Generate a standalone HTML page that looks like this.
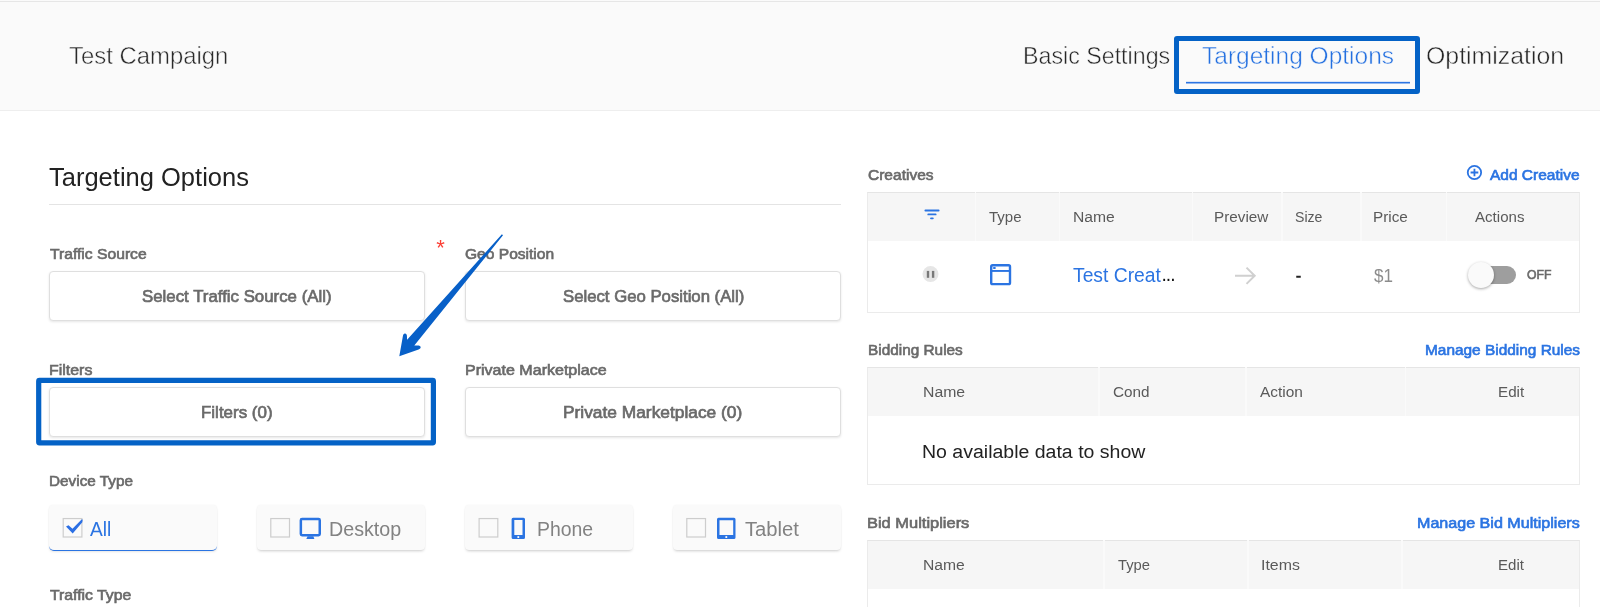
<!DOCTYPE html>
<html>
<head>
<meta charset="utf-8">
<title>Test Campaign</title>
<style>
*{box-sizing:border-box;margin:0;padding:0}
html,body{width:1600px;height:607px;overflow:hidden;background:#fff}
body{font-family:"Liberation Sans",sans-serif;position:relative;color:#333}
.abs{position:absolute}
.t{position:absolute;white-space:nowrap;line-height:1;transform-origin:0 0}
#root{position:absolute;left:0;top:0;width:1600px;height:607px;will-change:transform;overflow:hidden}
#hdr{left:0;top:0;width:1600px;height:111px;background:#fafafa;border-bottom:1px solid #eee}
#hdrtop{left:0;top:1px;width:1600px;height:1px;background:#e6e6e6}
.hl{position:absolute;border:5px solid #0462c6;border-radius:3px}
.btn{position:absolute;height:50px;width:376px;border:1px solid #dfdfdf;border-radius:4px;background:#fff;box-shadow:0 1px 2.5px rgba(0,0,0,.10)}
.card{position:absolute;top:504.6px;height:45.4px;width:168.3px;background:#fafafa;border-radius:4px;box-shadow:0 2px 3px -1px rgba(0,0,0,.20),0 0 1.5px rgba(0,0,0,.08)}
.cb{position:absolute;top:517.9px;width:19.8px;height:19.6px;border:1.2px solid #cfcfcf}
.tbl{position:absolute;left:867px;width:713px;border:1px solid #ebebeb;border-top-color:#e5e5e5;background:#fff}
.thd{position:absolute;left:868px;width:711px;height:48px;background:#f6f6f6}
.sep{position:absolute;width:1.5px;height:49px;background:#fafafa}
</style>
</head>
<body>
<div id="root">

<!-- HEADER -->
<div id="hdr" class="abs"></div>
<div id="hdrtop" class="abs"></div>
<div class="t" id="tc" style="left:68.72px;top:44.00px;font-size:24.60px;color:#2a2a2a;transform:scaleX(0.9716);-webkit-text-stroke:0.5px #fafafa">Test Campaign</div>
<div class="t" id="n1" style="left:1022.89px;top:44.01px;font-size:24.60px;color:#262626;transform:scaleX(0.9444);-webkit-text-stroke:0.5px #fafafa">Basic Settings</div>
<div class="t" id="n2" style="left:1201.76px;top:44.01px;font-size:24.60px;color:#2470e0;transform:scaleX(0.9962);-webkit-text-stroke:0.5px #fafafa">Targeting Options</div>
<div class="t" id="n3" style="left:1425.91px;top:44.01px;font-size:24.60px;color:#262626;transform:scaleX(1.0111);-webkit-text-stroke:0.5px #fafafa">Optimization</div>
<div class="hl" style="left:1174px;top:36px;width:246px;height:58px"></div>

<!-- LEFT COLUMN -->
<div class="t" id="h1" style="left:48.84px;top:165.02px;font-size:24.90px;color:#222;transform:scaleX(1.0249)">Targeting Options</div>
<div class="abs" style="left:49px;top:204px;width:792px;height:1px;background:#e4e4e4"></div>

<div class="t" id="l1" style="left:49.51px;top:246.01px;font-size:15.20px;color:#6a6a6a;transform:scaleX(1.0316);-webkit-text-stroke:0.65px #6a6a6a">Traffic Source</div>
<div class="t" style="left:436.3px;top:237px;font-size:22px;color:#fb3f35">*</div>
<div class="t" id="l2" style="left:464.85px;top:246.01px;font-size:15.20px;color:#6a6a6a;transform:scaleX(1.0250);-webkit-text-stroke:0.65px #6a6a6a">Geo Position</div>
<div class="btn" style="left:49px;top:271px"></div>
<div class="btn" style="left:465px;top:271px"></div>
<div class="t" id="b1" style="left:142.35px;top:288.01px;font-size:16.20px;color:#6a6a6a;transform:scaleX(1.0397);-webkit-text-stroke:0.65px #6a6a6a">Select Traffic Source (All)</div>
<div class="t" id="b2" style="left:562.56px;top:288.01px;font-size:16.20px;color:#6a6a6a;transform:scaleX(1.0338);-webkit-text-stroke:0.65px #6a6a6a">Select Geo Position (All)</div>

<div class="t" id="l3" style="left:49.05px;top:362.01px;font-size:15.20px;color:#6a6a6a;transform:scaleX(1.0490);-webkit-text-stroke:0.65px #6a6a6a">Filters</div>
<div class="t" id="l4" style="left:464.79px;top:362.01px;font-size:15.20px;color:#6a6a6a;transform:scaleX(1.0558);-webkit-text-stroke:0.65px #6a6a6a">Private Marketplace</div>
<div class="btn" style="left:49px;top:387px"></div>
<div class="btn" style="left:465px;top:387px"></div>
<div class="t" id="b3" style="left:201.47px;top:404.01px;font-size:16.20px;color:#6a6a6a;transform:scaleX(1.0469);-webkit-text-stroke:0.65px #6a6a6a">Filters (0)</div>
<div class="t" id="b4" style="left:563.24px;top:404.01px;font-size:16.20px;color:#6a6a6a;transform:scaleX(1.0711);-webkit-text-stroke:0.65px #6a6a6a">Private Marketplace (0)</div>

<div class="t" id="l5" style="left:48.80px;top:473.01px;font-size:15.20px;color:#6a6a6a;transform:scaleX(1.0083);-webkit-text-stroke:0.65px #6a6a6a">Device Type</div>

<div class="card" style="left:48.8px"></div>
<div class="abs" style="left:48.8px;top:544px;width:168.3px;height:7px;border-bottom:1.7px solid #2b74e2;border-radius:0 0 5px 5px"></div>
<div class="card" style="left:256.9px"></div>
<div class="card" style="left:465px"></div>
<div class="card" style="left:673px"></div>
<div class="t" id="d1" style="left:90.40px;top:520.01px;font-size:19.60px;color:#2b74e2;transform:scaleX(0.9775)">All</div>
<div class="t" id="d2" style="left:328.73px;top:520.02px;font-size:19.50px;color:#828282;transform:scaleX(1.0091)">Desktop</div>
<div class="t" id="d3" style="left:536.85px;top:520.02px;font-size:19.50px;color:#828282;transform:scaleX(0.9959)">Phone</div>
<div class="t" id="d4" style="left:744.60px;top:520.02px;font-size:19.50px;color:#828282;transform:scaleX(1.0370)">Tablet</div>

<div class="t" id="l6" style="left:49.71px;top:587.02px;font-size:15.20px;color:#6a6a6a;transform:scaleX(1.0379);-webkit-text-stroke:0.65px #6a6a6a">Traffic Type</div>


<!-- RIGHT COLUMN -->
<div class="t" id="r1" style="left:867.55px;top:167.01px;font-size:15.20px;color:#6a6a6a;transform:scaleX(1.0217);-webkit-text-stroke:0.65px #6a6a6a">Creatives</div>
<div class="t" id="r2" style="left:1490.42px;top:167.01px;font-size:15.20px;color:#2b74e2;transform:scaleX(1.0198);-webkit-text-stroke:0.65px #2b74e2">Add Creative</div>
<div class="tbl" style="top:192px;height:120.5px"></div>
<div class="thd" style="top:193px"></div>
<div class="sep" style="left:974.5px;top:192px"></div>
<div class="sep" style="left:1058.7px;top:192px"></div>
<div class="sep" style="left:1191.5px;top:192px"></div>
<div class="sep" style="left:1281px;top:192px"></div>
<div class="sep" style="left:1360px;top:192px"></div>
<div class="sep" style="left:1445.7px;top:192px"></div>
<div class="t" id="c1" style="left:989.20px;top:209.01px;font-size:15.30px;color:#5a5a5a;transform:scaleX(0.9826)">Type</div><div class="t" id="c2" style="left:1073.25px;top:209.01px;font-size:15.30px;color:#5a5a5a;transform:scaleX(1.0247)">Name</div><div class="t" id="c3" style="left:1213.58px;top:209.01px;font-size:15.30px;color:#5a5a5a;transform:scaleX(0.9979)">Preview</div><div class="t" id="c4" style="left:1295.44px;top:209.01px;font-size:15.30px;color:#5a5a5a;transform:scaleX(0.9231)">Size</div><div class="t" id="c5" style="left:1373.28px;top:209.01px;font-size:15.30px;color:#5a5a5a;transform:scaleX(1.0006)">Price</div><div class="t" id="c6" style="left:1474.75px;top:209.01px;font-size:15.30px;color:#5a5a5a;transform:scaleX(0.9856)">Actions</div>
<div class="t" id="v1" style="left:1073.01px;top:266.01px;font-size:19.30px;color:#2b74e2;transform:scaleX(0.9999)">Test Creat</div>
<div class="t" style="left:1161.5px;top:265.3px;font-size:19.3px;color:#111;letter-spacing:-1px">...</div>
<div class="t" id="v3" style="left:1374.33px;top:267.01px;font-size:18.60px;color:#8c8c8c;transform:scaleX(0.9163)">$1</div>
<!-- toggle -->
<div class="abs" style="left:1477px;top:266px;width:39.3px;height:18px;border-radius:9px;background:#9e9e9e"></div>
<div class="abs" style="left:1468px;top:261.7px;width:26.3px;height:26.3px;border-radius:50%;background:#fafafa;box-shadow:0 1px 3px rgba(0,0,0,.35)"></div>
<div class="t" id="v4" style="left:1527.34px;top:268.00px;font-size:13.60px;color:#6a6a6a;transform:scaleX(0.8997);-webkit-text-stroke:0.65px #6a6a6a">OFF</div>

<div class="t" id="r3" style="left:867.50px;top:342.01px;font-size:15.20px;color:#6a6a6a;transform:scaleX(1.0112);-webkit-text-stroke:0.65px #6a6a6a">Bidding Rules</div>
<div class="t" id="r4" style="left:1424.69px;top:342.01px;font-size:15.20px;color:#2b74e2;transform:scaleX(1.0144);-webkit-text-stroke:0.65px #2b74e2">Manage Bidding Rules</div>
<div class="tbl" style="top:367px;height:118px"></div>
<div class="thd" style="top:368px"></div>
<div class="sep" style="left:1098px;top:367px"></div>
<div class="sep" style="left:1245px;top:367px"></div>
<div class="sep" style="left:1404.8px;top:367px"></div>
<div class="t" id="e1" style="left:922.54px;top:384.00px;font-size:15.30px;color:#5a5a5a;transform:scaleX(1.0324)">Name</div><div class="t" id="e2" style="left:1112.73px;top:384.00px;font-size:15.30px;color:#5a5a5a;transform:scaleX(1.0014)">Cond</div><div class="t" id="e3" style="left:1260.10px;top:384.00px;font-size:15.30px;color:#5a5a5a;transform:scaleX(1.0105)">Action</div><div class="t" id="e4" style="left:1497.88px;top:384.00px;font-size:15.30px;color:#5a5a5a;transform:scaleX(0.9931)">Edit</div>
<div class="t" id="e5" style="left:922.24px;top:442.00px;font-size:19.20px;color:#222;transform:scaleX(1.0165)">No available data to show</div>

<div class="t" id="r5" style="left:867.26px;top:515.01px;font-size:15.20px;color:#6a6a6a;transform:scaleX(1.0825);-webkit-text-stroke:0.65px #6a6a6a">Bid Multipliers</div>
<div class="t" id="r6" style="left:1417.29px;top:515.01px;font-size:15.20px;color:#2b74e2;transform:scaleX(1.0593);-webkit-text-stroke:0.65px #2b74e2">Manage Bid Multipliers</div>
<div class="tbl" style="top:540px;height:100px"></div>
<div class="thd" style="top:541px;height:47.5px"></div>
<div class="sep" style="left:1103.3px;top:540px"></div>
<div class="sep" style="left:1247px;top:540px"></div>
<div class="sep" style="left:1401px;top:540px"></div>
<div class="t" id="f1" style="left:922.50px;top:557.00px;font-size:15.30px;color:#5a5a5a;transform:scaleX(1.0247)">Name</div><div class="t" id="f2" style="left:1118.45px;top:557.00px;font-size:15.30px;color:#5a5a5a;transform:scaleX(0.9672)">Type</div><div class="t" id="f3" style="left:1261.07px;top:557.00px;font-size:15.30px;color:#5a5a5a;transform:scaleX(1.0402)">Items</div><div class="t" id="f4" style="left:1498.05px;top:557.00px;font-size:15.30px;color:#5a5a5a;transform:scaleX(0.9832)">Edit</div>

<!-- ICONS + ARROW (svg overlay) -->
<svg class="abs" style="left:0;top:0" width="1600" height="607" viewBox="0 0 1600 607">
  <!-- checkboxes -->
  <rect x="63.20" y="518.55" width="18.7" height="18.45" fill="none" stroke="#cdcdcd" stroke-width="1.2"/>
  <rect x="270.80" y="518.55" width="18.7" height="18.45" fill="none" stroke="#cdcdcd" stroke-width="1.2"/>
  <rect x="479.10" y="518.55" width="18.7" height="18.45" fill="none" stroke="#cdcdcd" stroke-width="1.2"/>
  <rect x="686.80" y="518.55" width="18.7" height="18.45" fill="none" stroke="#cdcdcd" stroke-width="1.2"/>
  <!-- checkmark -->
  <path d="M66.0 526.5 L68.5 525.2 L72.5 528.7 L81.6 519.6 L82.7 519.5 L82.3 522.2 L72.7 533.6 Z" fill="#2b6fe4"/>
  <!-- desktop -->
  <rect x="300.85" y="519" width="18.9" height="16.2" rx="1.2" fill="none" stroke="#2b74e2" stroke-width="2.5"/>
  <path d="M307.6 536.3 L313.3 536.3 L314.4 539 L306.3 539 Z" fill="#2b74e2"/>
  <!-- phone -->
  <path fill-rule="evenodd" fill="#2b74e2" d="M513.1 517.75 h10.4 a1.5 1.5 0 0 1 1.5 1.5 v18.25 a1.5 1.5 0 0 1 -1.5 1.5 h-10.4 a1.5 1.5 0 0 1 -1.5 -1.5 v-18.25 a1.5 1.5 0 0 1 1.5 -1.5 Z M514.3 520 v14.9 h8.2 v-14.9 Z M518.3 535.9 a1.1 1.1 0 1 0 0.001 0 Z"/>
  <!-- tablet -->
  <path fill-rule="evenodd" fill="#2b74e2" d="M718.5 517.75 h15.5 a1.5 1.5 0 0 1 1.5 1.5 v18.25 a1.5 1.5 0 0 1 -1.5 1.5 h-15.5 a1.5 1.5 0 0 1 -1.5 -1.5 v-18.25 a1.5 1.5 0 0 1 1.5 -1.5 Z M719.5 520.2 v14.7 h13.7 v-14.7 Z M726.3 535.9 a1.1 1.1 0 1 0 0.001 0 Z"/>

  <!-- nav underline -->
  <rect x="1186" y="81.85" width="224" height="1.65" fill="#2b74e2"/>
  <!-- filters highlight -->
  <rect x="38.7" y="380.4" width="394.7" height="62.4" rx="0.8" fill="none" stroke="#0462c6" stroke-width="5.2"/>
  <!-- big arrow -->
  <defs><linearGradient id="ag" x1="0" y1="0" x2="1" y2="1"><stop offset="0" stop-color="#0a5cc6"/><stop offset="1" stop-color="#0d66cf"/></linearGradient></defs>
  <path fill="#0860c8" d="M501.9 234.2 L407.1 339.8 L406.9 335.6 Q406.6 333.4 404.9 333.5 Q403.4 333.7 403.0 335.6 L399.3 356.3 L418.6 349.6 Q420.9 348.6 420.7 346.9 Q420.3 345.3 418.4 345.4 L414.3 345.6 L503 235.3 Z"/>

  <!-- filter icon -->
  <g stroke="#2b74e2" stroke-width="1.9" stroke-linecap="round">
    <line x1="925.4" y1="210.55" x2="938.6" y2="210.55"/>
    <line x1="928.3" y1="214.4" x2="935.6" y2="214.4"/>
    <line x1="931" y1="218.35" x2="932.8" y2="218.35"/>
  </g>
  <!-- pause icon -->
  <circle cx="930.5" cy="274.05" r="8" fill="#e6e6e6"/>
  <rect x="926.8" y="270.9" width="2.4" height="6.9" fill="#787878"/>
  <rect x="931.9" y="270.9" width="2.4" height="6.9" fill="#787878"/>
  <!-- window icon -->
  <rect x="991.2" y="265.3" width="18.8" height="18.8" rx="1.4" fill="none" stroke="#2b74e2" stroke-width="2.4"/>
  <rect x="991.1" y="270" width="19" height="1.9" fill="#2b74e2"/>
  <rect x="993.2" y="267" width="2.4" height="2" fill="#2b74e2"/>
  <!-- preview arrow -->
  <path d="M1235 275.75 H1254.5 M1246.5 267.6 L1254.7 275.75 L1246.5 283.9" fill="none" stroke="#d0d0d0" stroke-width="2"/>
  <!-- dash -->
  <rect x="1296.25" y="275.75" width="4.5" height="2" fill="#222"/>
  <!-- add icon -->
  <circle cx="1474.45" cy="172.5" r="6.7" fill="none" stroke="#2b74e2" stroke-width="1.8"/>
  <path d="M1470.6 172.5 H1478.3 M1474.45 168.65 V176.35" stroke="#2b74e2" stroke-width="1.8" fill="none"/>
</svg>
</div>
</body>
</html>
